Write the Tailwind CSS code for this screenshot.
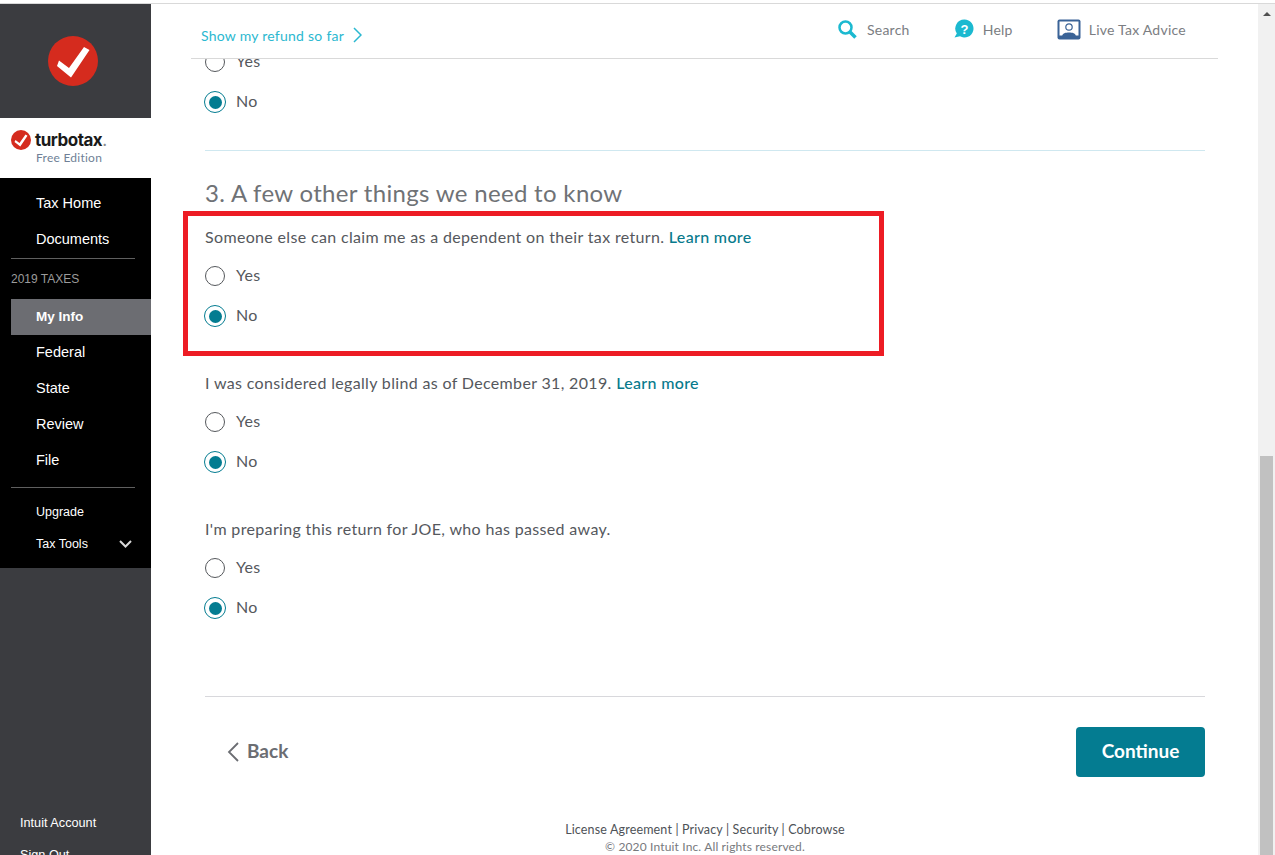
<!DOCTYPE html>
<html>
<head>
<meta charset="utf-8">
<script src="https://cdn.jsdelivr.net/npm/@tailwindcss/browser@4"></script>
</head>
<body class="m-0 bg-white">
<div class="relative w-[1275px] h-[855px] overflow-hidden bg-white flex flex-col font-['Lato','Liberation_Sans',sans-serif]">
  <div class="shrink-0 border-t border-[#d9d9d9] mt-[3px]"></div>
  <div class="flex-1 min-h-0 flex">
    <!-- Sidebar -->
    <aside class="w-[151px] shrink-0 flex flex-col bg-[#3b3c40] overflow-hidden">
      <div class="h-[114px] shrink-0 flex items-center justify-center pr-[5px]">
        <svg width="50" height="50" viewBox="0 0 50 50"><circle cx="25" cy="25" r="25" fill="#d52b1e"/><path d="M11 24.500 L21 32 L36 11 L41.500 14 L23 41.500 L9 30 Z" fill="#fff"/></svg>
      </div>
      <div class="h-[60px] shrink-0 bg-white relative pl-[11px] pt-[12px]">
        <div class="flex items-center gap-[4px] h-[20px]">
          <svg width="20" height="20" viewBox="0 0 20 20"><circle cx="10" cy="10" r="10" fill="#d52b1e"/><path d="M4.500 10 L8.500 13 L14.500 4.500 L16.500 5.800 L9.300 16.500 L3.500 12 Z" fill="#fff"/></svg>
          <span class="text-[17px] leading-[20px] font-bold text-[#1a1a1a] font-['Inter',sans-serif] tracking-[-0.5px]">turbotax<span class="text-[#8a8a8a] font-normal">.</span></span>
        </div>
        <div class="ml-[25px] text-[12px] leading-[16px] text-[#6f7f96] tracking-[0.25px]">Free Edition</div>
      </div>
      <nav class="h-[390px] shrink-0 bg-black text-white font-['Liberation_Sans',sans-serif] pt-[8px]">
        <div class="h-[36px] pl-[36px] flex items-center text-[14.500px]">Tax Home</div>
        <div class="h-[36px] pl-[36px] flex items-center text-[14.500px]">Documents</div>
        <div class="mx-[11px] w-[124px] border-t border-[#5f5f5f]"></div>
        <div class="h-[40px] pl-[11px] flex items-center text-[12px] text-[#9b9b9b]">2019 TAXES</div>
        <div class="h-[36px] ml-[11px] pl-[25px] flex items-center text-[13.500px] font-bold bg-[#6c6d72]">My Info</div>
        <div class="h-[36px] pl-[36px] flex items-center text-[14.500px]">Federal</div>
        <div class="h-[36px] pl-[36px] flex items-center text-[14.500px]">State</div>
        <div class="h-[36px] pl-[36px] flex items-center text-[14.500px]">Review</div>
        <div class="h-[36px] pl-[36px] flex items-center text-[14.500px]">File</div>
        <div class="mx-[11px] w-[124px] border-t border-[#5f5f5f] mt-[8px]"></div>
        <div class="h-[32px] pl-[36px] flex items-center text-[12.500px] mt-[8px]">Upgrade</div>
        <div class="h-[32px] pl-[36px] pr-[19px] flex items-center justify-between text-[12.500px]">
          <span>Tax Tools</span>
          <svg width="13" height="8" viewBox="0 0 13 8" fill="none"><path d="M1 1 L6.500 6.500 L12 1" stroke="#d8d8d8" stroke-width="2"/></svg>
        </div>
      </nav>
      <div class="flex-1 pl-[20px] pt-[246px] text-white font-['Liberation_Sans',sans-serif] text-[12.700px]">
        <div class="h-[20px] flex items-center">Intuit Account</div>
        <div class="h-[20px] flex items-center mt-[12px]">Sign Out</div>
      </div>
    </aside>

    <!-- Main column -->
    <main class="flex-1 min-w-0 flex flex-col bg-white">
      <header class="h-[54px] shrink-0 ml-[40px] w-[1027px] border-b border-[#d9d9d9] box-content flex items-start">
        <div class="ml-[10px] mt-[21px] flex items-center text-[14px] text-[#2bb8d0] tracking-[0.25px] h-[20px]">
          <span>Show my refund so far</span>
          <svg class="ml-[9px]" width="9" height="16" viewBox="0 0 9 16" fill="none"><path d="M1 1 L8 8 L1 15" stroke="#2bb8d0" stroke-width="1.500"/></svg>
        </div>
        <div class="ml-auto mr-[32px] flex items-center h-[22px] mt-[14px] text-[#7b7d82] text-[14px] tracking-[0.25px]">
          <svg width="19" height="19" viewBox="0 0 19 19" fill="none"><circle cx="7.500" cy="7.500" r="6" stroke="#1bb9d0" stroke-width="2.500"/><path d="M12 12 L17.500 17.500" stroke="#1bb9d0" stroke-width="3.500"/></svg>
          <span class="ml-[10px]">Search</span>
          <svg class="ml-[44px]" width="20" height="20" viewBox="0 0 20 20"><path d="M10.500 0.500a9 9 0 1 1 -4.500 16.800 L0.500 18.500 L2.800 14.500 A9 9 0 0 1 10.500 0.500Z" fill="#1bb9d0"/><text x="10.500" y="15" text-anchor="middle" font-size="13" font-weight="700" fill="#fff" font-family="Liberation Sans">?</text></svg>
          <span class="ml-[9px]">Help</span>
          <svg class="ml-[44px]" width="24" height="21" viewBox="0 0 24 21"><rect x="0.500" y="0.500" width="23" height="20" rx="2" fill="#3a6397"/><rect x="2.500" y="2.500" width="19" height="14" fill="#fff"/><circle cx="12" cy="8" r="3.200" fill="none" stroke="#3a6397" stroke-width="1.200"/><path d="M5 18 C5 14 9 13.500 12 13.500 C15 13.500 19 14 19 18 Z" fill="#3a6397"/></svg>
          <span class="ml-[8px]">Live Tax Advice</span>
        </div>
      </header>

      <div class="relative flex-1 min-h-0 overflow-hidden pl-[54px] pr-[53px] text-[16px] text-[#55585d] tracking-[0.34px]">
        <div class="-mt-[17px]">
          <div class="h-[40px] flex items-center gap-[10px]"><span class="w-[20px] h-[20px] rounded-full border-[1.500px] border-[#55585c]"></span><span class="ml-[1px] pb-[2px]">Yes</span></div>
          <div class="h-[40px] flex items-center gap-[10px]"><span class="w-[22px] h-[22px] -mx-[1px] rounded-full border-[1.500px] border-[#037c91] flex items-center justify-center"><span class="w-[13px] h-[13px] rounded-full bg-[#037c91]"></span></span><span class="ml-[1px] pb-[2px]">No</span></div>
        </div>
        <div class="mt-[28px] border-t border-[#cfe8f0]"></div>
        <h2 class="mt-[26px] text-[24px] leading-[32px] font-normal text-[#6f7276] tracking-[0.32px]">3. A few other things we need to know</h2>

        <div class="mt-[17px] h-[24px] leading-[22px]">Someone else can claim me as a dependent on their tax return. <span class="text-[#087a8c] font-medium">Learn more</span></div>
        <div class="mt-[6px] h-[40px] flex items-center gap-[10px]"><span class="w-[20px] h-[20px] rounded-full border-[1.500px] border-[#55585c]"></span><span class="ml-[1px] pb-[2px]">Yes</span></div>
        <div class="h-[40px] flex items-center gap-[10px]"><span class="w-[22px] h-[22px] -mx-[1px] rounded-full border-[1.500px] border-[#037c91] flex items-center justify-center"><span class="w-[13px] h-[13px] rounded-full bg-[#037c91]"></span></span><span class="ml-[1px] pb-[2px]">No</span></div>

        <div class="mt-[36px] h-[24px] leading-[22px]">I was considered legally blind as of December 31, 2019. <span class="text-[#087a8c] font-medium">Learn more</span></div>
        <div class="mt-[6px] h-[40px] flex items-center gap-[10px]"><span class="w-[20px] h-[20px] rounded-full border-[1.500px] border-[#55585c]"></span><span class="ml-[1px] pb-[2px]">Yes</span></div>
        <div class="h-[40px] flex items-center gap-[10px]"><span class="w-[22px] h-[22px] -mx-[1px] rounded-full border-[1.500px] border-[#037c91] flex items-center justify-center"><span class="w-[13px] h-[13px] rounded-full bg-[#037c91]"></span></span><span class="ml-[1px] pb-[2px]">No</span></div>

        <div class="mt-[36px] h-[24px] leading-[22px]">I'm preparing this return for JOE, who has passed away.</div>
        <div class="mt-[6px] h-[40px] flex items-center gap-[10px]"><span class="w-[20px] h-[20px] rounded-full border-[1.500px] border-[#55585c]"></span><span class="ml-[1px] pb-[2px]">Yes</span></div>
        <div class="h-[40px] flex items-center gap-[10px]"><span class="w-[22px] h-[22px] -mx-[1px] rounded-full border-[1.500px] border-[#037c91] flex items-center justify-center"><span class="w-[13px] h-[13px] rounded-full bg-[#037c91]"></span></span><span class="ml-[1px] pb-[2px]">No</span></div>

        <div class="mt-[68px] border-t border-[#d8d8dc]"></div>
        <div class="mt-[30px] flex items-center justify-between">
          <div class="ml-[22px] flex items-center text-[19px] font-bold text-[#6b6d72] tracking-normal">
            <svg class="mr-[8px]" width="12" height="20" viewBox="0 0 12 20" fill="none"><path d="M11 1 L2 10 L11 19" stroke="#6b6d72" stroke-width="1.800"/></svg>
            <span class="pb-[2px]">Back</span>
          </div>
          <div class="w-[129px] h-[50px] pb-[2px] rounded-[4px] bg-[#047c91] text-white font-bold text-[19px] flex items-center justify-center tracking-normal">Continue</div>
        </div>
        <div class="mt-[44px] text-center text-[12.500px] leading-[17px] tracking-[0.15px]">
          <div class="text-[#4e5257]">License Agreement | Privacy | Security | Cobrowse</div>
          <div class="text-[#77797d] text-[12px]">© 2020 Intuit Inc. All rights reserved.</div>
        </div>

        <!-- Annotation -->
        <div class="absolute left-[32px] top-[152px] w-[701px] h-[145px] border-[5px] border-[#ed1c24]"></div>
      </div>
    </main>

    <!-- Scrollbar -->
    <div class="w-[17px] shrink-0 bg-[#f1f1f1] relative">
      <div class="absolute left-[5px] top-[8px] w-0 h-0 border-x-[4px] border-x-transparent border-b-[4px] border-b-[#505050]"></div>
      <div class="absolute left-[2px] right-[2px] top-[452px] bottom-0 bg-[#c1c1c1]"></div>
    </div>
  </div>
</div>
</body>
</html>
